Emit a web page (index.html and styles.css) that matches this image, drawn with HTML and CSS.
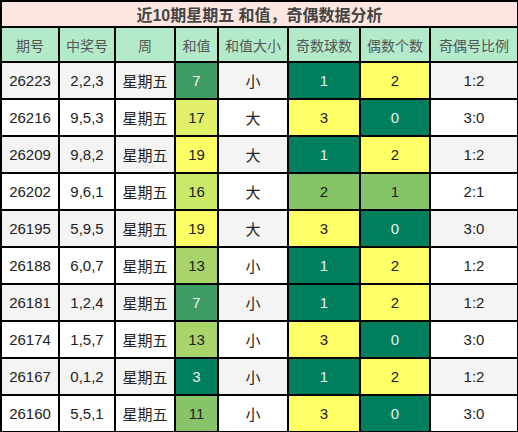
FILE: index.html
```html
<!DOCTYPE html>
<html lang="zh-CN">
<head>
    <meta charset="UTF-8">
    <meta name="viewport" content="width=device-width, initial-scale=1.0">
    <title>近10期星期五 和值，奇偶数据分析</title>
    <link rel="stylesheet" href="styles.css">
</head>
<body>
    <table class="stats">
        <colgroup>
            <col class="c-issue">
            <col class="c-nums">
            <col class="c-day">
            <col class="c-sum">
            <col class="c-size">
            <col class="c-odd">
            <col class="c-even">
            <col class="c-ratio">
        </colgroup>
        <tr class="title-row">
            <th colspan="8">近10期星期五 和值，奇偶数据分析</th>
        </tr>
        <tr class="head-row">
            <th>期号</th>
            <th>中奖号</th>
            <th>周</th>
            <th>和值</th>
            <th>和值大小</th>
            <th>奇数球数</th>
            <th>偶数个数</th>
            <th>奇偶号比例</th>
        </tr>
        <tr class="row alt">
            <td>26223</td><td>2,2,3</td><td>星期五</td>
            <td class="s7">7</td><td>小</td>
            <td class="teal">1</td><td class="yellow">2</td><td>1:2</td>
        </tr>
        <tr class="row">
            <td>26216</td><td>9,5,3</td><td>星期五</td>
            <td class="s17">17</td><td>大</td>
            <td class="yellow">3</td><td class="teal">0</td><td>3:0</td>
        </tr>
        <tr class="row alt">
            <td>26209</td><td>9,8,2</td><td>星期五</td>
            <td class="s19">19</td><td>大</td>
            <td class="teal">1</td><td class="yellow">2</td><td>1:2</td>
        </tr>
        <tr class="row">
            <td>26202</td><td>9,6,1</td><td>星期五</td>
            <td class="s16">16</td><td>大</td>
            <td class="green">2</td><td class="green">1</td><td>2:1</td>
        </tr>
        <tr class="row alt">
            <td>26195</td><td>5,9,5</td><td>星期五</td>
            <td class="s19">19</td><td>大</td>
            <td class="yellow">3</td><td class="teal">0</td><td>3:0</td>
        </tr>
        <tr class="row">
            <td>26188</td><td>6,0,7</td><td>星期五</td>
            <td class="s13">13</td><td>小</td>
            <td class="teal">1</td><td class="yellow">2</td><td>1:2</td>
        </tr>
        <tr class="row alt">
            <td>26181</td><td>1,2,4</td><td>星期五</td>
            <td class="s7">7</td><td>小</td>
            <td class="teal">1</td><td class="yellow">2</td><td>1:2</td>
        </tr>
        <tr class="row">
            <td>26174</td><td>1,5,7</td><td>星期五</td>
            <td class="s13">13</td><td>小</td>
            <td class="yellow">3</td><td class="teal">0</td><td>3:0</td>
        </tr>
        <tr class="row alt">
            <td>26167</td><td>0,1,2</td><td>星期五</td>
            <td class="s3">3</td><td>小</td>
            <td class="teal">1</td><td class="yellow">2</td><td>1:2</td>
        </tr>
        <tr class="row">
            <td>26160</td><td>5,5,1</td><td>星期五</td>
            <td class="s11">11</td><td>小</td>
            <td class="yellow">3</td><td class="teal">0</td><td>3:0</td>
        </tr>
    </table>
</body>
</html>
```

FILE: styles.css
```css
body {
    margin: 0;
    background-color: #fff;
    font-family: "Liberation Sans", "Noto Sans CJK SC", sans-serif;
}

.stats {
    border-collapse: collapse;
    table-layout: fixed;
    width: 517px;
}

.stats th,
.stats td {
    border: 2px solid #000;
    padding: 0;
    text-align: center;
    vertical-align: middle;
}

.c-issue { width: 58px; }
.c-nums { width: 56px; }
.c-day { width: 60px; }
.c-sum { width: 43px; }
.c-size { width: 70px; }
.c-odd { width: 72px; }
.c-even { width: 70px; }
.c-ratio { width: 88px; }

.title-row th {
    height: 23px;
    background-color: #fde6e0;
    color: #444;
    font-size: 16px;
    font-weight: bold;
}

.head-row th {
    height: 33px;
    background-color: #b3ebca;
    color: #555;
    font-size: 14px;
    font-weight: normal;
}

.row td {
    height: 35px;
    background-color: #fff;
    color: #222;
    font-size: 15px;
}

.row.alt td {
    background-color: #f4f4f4;
}

.row td.teal { background-color: #007f5f; color: #e6f2ee; }
.row td.yellow { background-color: #ffff66; }
.row td.green { background-color: #84c466; }

.row td.s3 { background-color: #007f5f; color: #e6f2ee; }
.row td.s7 { background-color: #3e9c64; color: #eef6f0; }
.row td.s11 { background-color: #86c467; }
.row td.s13 { background-color: #a8d46a; }
.row td.s16 { background-color: #cbe868; }
.row td.s17 { background-color: #e1ef69; }
.row td.s19 { background-color: #fdfd66; }
```
